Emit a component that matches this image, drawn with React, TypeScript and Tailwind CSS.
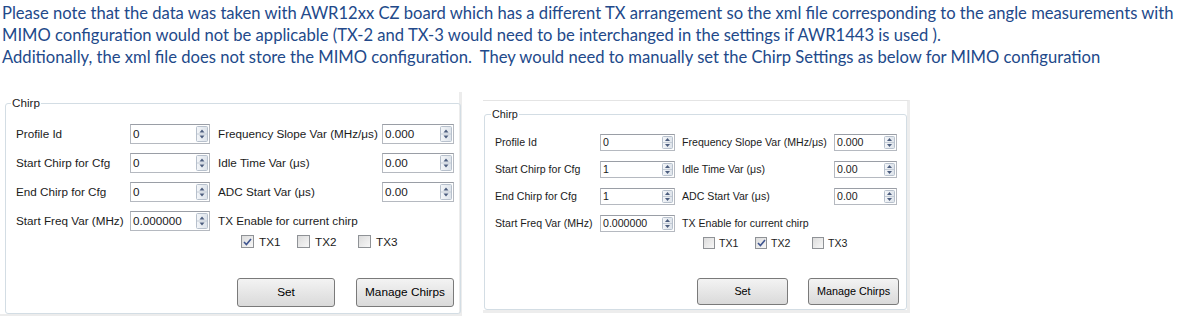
import React from "react";

type Row = [string, string, string, string];

const SpinArrows = ({ small }: { small: boolean }) => {
  const w = small ? 11 : 12;
  const h = small ? 13 : 16;
  const mid = h / 2;
  return (
    <svg width={w} height={h} viewBox={`0 0 ${w} ${h}`} className="shrink-0">
      <defs>
        <linearGradient id={small ? "spg-s" : "spg-l"} x1="0" y1="0" x2="1" y2="0">
          <stop offset="0" stopColor="#f4f6f9" />
          <stop offset="1" stopColor="#dde3ea" />
        </linearGradient>
      </defs>
      <rect x="0.5" y="0.5" width={w - 1} height={h - 1} rx="1" fill={`url(#${small ? "spg-s" : "spg-l"})`} stroke="#b7c0cc" />
      <line x1="1" y1={mid} x2={w - 1} y2={mid} stroke="#c4ccd6" />
      <path d={`M${w / 2 - 2.5} ${mid - 1.5} L${w / 2} ${mid - 4.5} L${w / 2 + 2.5} ${mid - 1.5} Z`} fill="#4c5d7e" />
      <path d={`M${w / 2 - 2.5} ${mid + 1.5} L${w / 2} ${mid + 4.5} L${w / 2 + 2.5} ${mid + 1.5} Z`} fill="#4c5d7e" />
    </svg>
  );
};

const SpinBox = ({ value, small, wide }: { value: string; small: boolean; wide: boolean }) => (
  <div
    className={
      small
        ? wide
          ? "flex items-center h-[17px] w-[75px] border border-[#b5b9c0] border-t-[#9a9ea6] bg-white pl-[2px] pr-[1px]"
          : "flex items-center h-[17px] w-[63px] border border-[#b5b9c0] border-t-[#9a9ea6] bg-white pl-[2px] pr-[1px]"
        : wide
        ? "flex items-center h-[20px] w-[80px] border border-[#b5b9c0] border-t-[#9a9ea6] bg-white pl-[2px] pr-[1px]"
        : "flex items-center h-[20px] w-[72px] border border-[#b5b9c0] border-t-[#9a9ea6] bg-white pl-[2px] pr-[1px]"
    }
  >
    <span className="flex-1 leading-none">{value}</span>
    <SpinArrows small={small} />
  </div>
);

const CheckBox = ({ label, checked, small }: { label: string; checked: boolean; small: boolean }) => (
  <div className="flex items-center">
    <div
      className={
        small
          ? "flex items-center justify-center w-[12px] h-[12px] border border-[#8f9296] bg-gradient-to-br from-[#dcdcdc] to-[#f7f7f7]"
          : "flex items-center justify-center w-[13px] h-[13px] border border-[#8f9296] bg-gradient-to-br from-[#dcdcdc] to-[#f7f7f7]"
      }
    >
      {checked && (
        <svg width="9" height="8" viewBox="0 0 9 8">
          <path d="M1 4 L3.4 6.6 L8 1" fill="none" stroke="#3f5590" strokeWidth="1.6" />
        </svg>
      )}
    </div>
    <span className={small ? "ml-[4px]" : "ml-[5px]"}>{label}</span>
  </div>
);

const Panel = ({
  small,
  rows,
  freq,
  tx,
}: {
  small: boolean;
  rows: Row[];
  freq: string;
  tx: number;
}) => {
  const rowCls = small
    ? "grid grid-cols-[105px_75px_159px_63px] items-center h-[27px]"
    : "grid grid-cols-[114px_80px_172px_72px] items-center h-[29px]";
  const l2 = small ? "pl-[7px] whitespace-nowrap" : "pl-[8px] whitespace-nowrap";
  const btn = small
    ? "h-[27px] w-[91px] rounded-[3px] border border-[#7a7a7a] bg-gradient-to-b from-[#f3f3f3] to-[#dadada] text-[10.8px] leading-none text-black"
    : "h-[29px] w-[98px] rounded-[3px] border border-[#7a7a7a] bg-gradient-to-b from-[#f3f3f3] to-[#dadada] text-[11.8px] leading-none text-black";
  return (
    <div
      className={
        small
          ? "mt-[8px] ml-[21px] w-[427px] bg-white border-t border-t-[#e4e4e4] border-r-[3px] border-r-[#ededed] border-b-[3px] border-b-[#ededed] pt-[7px] pl-[1px]"
          : "w-[462px] bg-white border-r-[3px] border-r-[#ececec] border-b-[2px] border-b-[#ececec] pt-[4px] pl-[5px]"
      }
    >
      <fieldset
        className={
          small
            ? "w-[423px] border border-[#d3dde4] rounded-[3px] pl-[10px] pr-[7px] pb-[4px] text-[10.6px] text-[#1b1b1b]"
            : "w-[454px] border border-[#d3dde4] rounded-[3px] pl-[10px] pr-[6px] pb-[6px] text-[11.7px] text-[#1b1b1b]"
        }
        style={{ fontFamily: '"Liberation Sans", Arial, sans-serif' }}
      >
        <legend className={small ? "ml-[-4px] px-[1px] leading-[13px] text-[10.8px]" : "ml-[-5px] px-[1px] leading-[14px] text-[11.7px]"}>
          Chirp
        </legend>
        <div className={small ? "pt-[8px]" : "pt-[9px]"}>
          {rows.map((r) => (
            <div key={r[0]} className={rowCls}>
              <span className="whitespace-nowrap">{r[0]}</span>
              <SpinBox value={r[1]} small={small} wide />
              <span className={l2}>{r[2]}</span>
              <SpinBox value={r[3]} small={small} wide={false} />
            </div>
          ))}
          <div className={rowCls}>
            <span className="whitespace-nowrap">Start Freq Var (MHz)</span>
            <SpinBox value={freq} small={small} wide />
            <span className={l2 + " col-span-2"}>TX Enable for current chirp</span>
          </div>
          <div className={small ? "flex h-[12px] leading-none ml-[208px]" : "flex h-[13px] leading-none ml-[225px]"}>
            <div className={small ? "w-[52px]" : "w-[56px]"}>
              <CheckBox label="TX1" checked={tx === 1} small={small} />
            </div>
            <div className={small ? "w-[57px]" : "w-[61px]"}>
              <CheckBox label="TX2" checked={tx === 2} small={small} />
            </div>
            <CheckBox label="TX3" checked={tx === 3} small={small} />
          </div>
          <div className={small ? "flex justify-end gap-[20px] mt-[29px]" : "flex justify-end gap-[21px] mt-[30px]"}>
            <button className={btn}>Set</button>
            <button className={btn}>Manage Chirps</button>
          </div>
        </div>
      </fieldset>
    </div>
  );
};

const leftRows: Row[] = [
  ["Profile Id", "0", "Frequency Slope Var (MHz/μs)", "0.000"],
  ["Start Chirp for Cfg", "0", "Idle Time Var (μs)", "0.00"],
  ["End Chirp for Cfg", "0", "ADC Start Var (μs)", "0.00"],
];

const rightRows: Row[] = [
  ["Profile Id", "0", "Frequency Slope Var (MHz/μs)", "0.000"],
  ["Start Chirp for Cfg", "1", "Idle Time Var (μs)", "0.00"],
  ["End Chirp for Cfg", "1", "ADC Start Var (μs)", "0.00"],
];

export default function App() {
  return (
    <div className="w-[1192px] h-[325px] bg-white overflow-hidden">
      <div
        className="pl-[2px] pt-[2px] text-[16.6px] leading-[22px] text-[#22498a] whitespace-pre"
        style={{ fontFamily: "Lato, 'Open Sans', sans-serif" }}
      >
        <div>
          Please note that the data was taken with AWR12xx CZ board which has a different TX arrangement so the xml file corresponding to the angle measurements with
        </div>
        <div>
          MIMO configuration would not be applicable (TX-2 and TX-3 would need to be interchanged in the settings if AWR1443 is used ).
        </div>
        <div>
          Additionally, the xml file does not store the MIMO configuration.  They would need to manually set the Chirp Settings as below for MIMO configuration
        </div>
      </div>
      <div className="flex items-start mt-[24px]">
        <Panel small={false} rows={leftRows} freq="0.000000" tx={1} />
        <Panel small rows={rightRows} freq="0.000000" tx={2} />
      </div>
    </div>
  );
}
